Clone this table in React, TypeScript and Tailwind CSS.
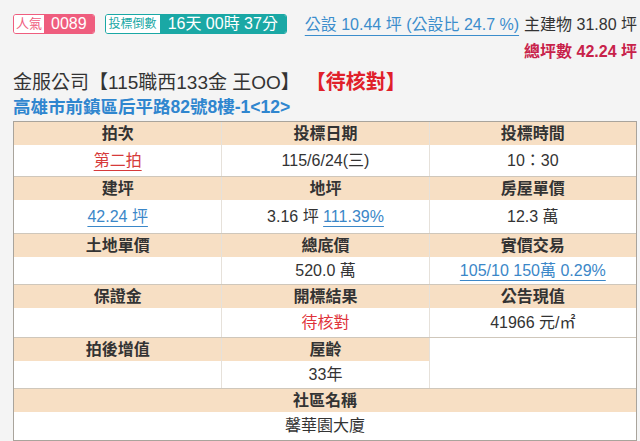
import React from 'react';

type Cell = { label: string; value?: React.ReactNode };

const rows: Cell[][] = [
  [
    { label: '拍次', value: <span className="text-[#d63a3a] underline decoration-[#d63a3a] underline-offset-4">第二拍</span> },
    { label: '投標日期', value: '115/6/24(三)' },
    { label: '投標時間', value: '10：30' },
  ],
  [
    { label: '建坪', value: <span className="text-[#3b87c8] underline underline-offset-4">42.24 坪</span> },
    { label: '地坪', value: <span>3.16 坪 <span className="text-[#3b87c8] underline underline-offset-4">111.39%</span></span> },
    { label: '房屋單價', value: '12.3 萬' },
  ],
  [
    { label: '土地單價', value: '' },
    { label: '總底價', value: '520.0 萬' },
    { label: '實價交易', value: <span className="text-[#3b87c8] underline underline-offset-4">105/10 150萬 0.29%</span> },
  ],
  [
    { label: '保證金', value: '' },
    { label: '開標結果', value: <span className="text-[#e0333a]">待核對</span> },
    { label: '公告現值', value: '41966 元/㎡' },
  ],
];

// value row heights read off the screenshot, they are not all the same
const valueH = ['h-[31px]', 'h-[33px]', 'h-[27px]', 'h-[29px]'];

const font = { fontFamily: '"Liberation Sans", "Noto Sans CJK TC", sans-serif' };

export default function App() {
  return (
    <div className="min-h-[441px] bg-[#f4f4f4] text-[#333] pl-[13px] pr-[3px] pt-[14px]" style={font}>
      {/* top bar */}
      <div className="flex items-start">
        <div className="flex h-[20px] rounded-[3px] border border-[#ef5d7e] overflow-hidden">
          <span className="bg-white text-[#ef5d7e] text-[13px] px-[2px] flex items-center">人氣</span>
          <span className="bg-[#ef5d7e] text-white text-[16px] px-[7px] flex items-center">0089</span>
        </div>
        <div className="ml-[10px] flex h-[20px] rounded-[3px] border border-[#1aa8a5] overflow-hidden">
          <span className="bg-white text-[#1aa8a5] text-[12px] px-[3px] flex items-center">投標倒數</span>
          <span className="bg-[#1aa8a5] text-white text-[16px] px-[8px] flex items-center">16天 00時 37分</span>
        </div>
        <div className="ml-auto flex items-center text-[16px] leading-[22px]">
          <span className="text-[#3b8dcc] underline underline-offset-[5px] decoration-[#3b8dcc]">公設 10.44 坪 (公設比 24.7 %)</span>
          <span className="ml-[5px]">主建物 31.80 坪</span>
        </div>
      </div>
      <div className="flex justify-end mt-[4px] text-[16px] leading-[24px] text-[#c8224a] font-bold">總坪數 42.24 坪</div>

      <div className="mt-[6px] h-[24px] flex items-center whitespace-nowrap">
        <span className="text-[19px] leading-none">金服公司【115職西133金 王OO】</span>
        <span className="ml-[6px] text-[20px] leading-none text-[#e0202a] font-bold">【待核對】</span>
      </div>
      <div className="text-[17.5px] leading-[27px] font-bold text-[#2f86cf]">高雄市前鎮區后平路82號8樓-1&lt;12&gt;</div>

      {/* info table */}
      <div className="border border-[#a9a49c] bg-white text-[16px]">
        {rows.map((row, i) => (
          <div key={i} className={i > 0 ? 'border-t border-[#cfc7bb]' : ''}>
            <div className="grid grid-cols-3 bg-[#f7dfc4] h-[23px]">
              {row.map((c, j) => (
                <div key={j} className={`flex items-center justify-center font-bold ${j > 0 ? 'border-l border-[#e6e1da]' : ''}`}>{c.label}</div>
              ))}
            </div>
            <div className={`grid grid-cols-3 ${valueH[i]}`}>
              {row.map((c, j) => (
                <div key={j} className={`flex items-center justify-center ${j > 0 ? 'border-l border-[#e6e1da]' : ''}`}>{c.value}</div>
              ))}
            </div>
          </div>
        ))}
        <div className="border-t border-[#cfc7bb] grid grid-cols-3">
          <div className="col-span-2">
            <div className="grid grid-cols-2 bg-[#f7dfc4] h-[23px]">
              <div className="flex items-center justify-center font-bold">拍後增值</div>
              <div className="flex items-center justify-center font-bold border-l border-[#e6e1da]">屋齡</div>
            </div>
            <div className="grid grid-cols-2 h-[27px]">
              <div className="flex items-center justify-center"></div>
              <div className="flex items-center justify-center border-l border-[#e6e1da]">33年</div>
            </div>
          </div>
          <div className="border-l border-[#e6e1da] bg-white"></div>
        </div>
        <div className="border-t border-[#cfc7bb]">
          <div className="bg-[#f7dfc4] h-[23px] flex items-center justify-center font-bold">社區名稱</div>
          <div className="h-[28px] flex items-center justify-center">馨華園大廈</div>
        </div>
      </div>
    </div>
  );
}
